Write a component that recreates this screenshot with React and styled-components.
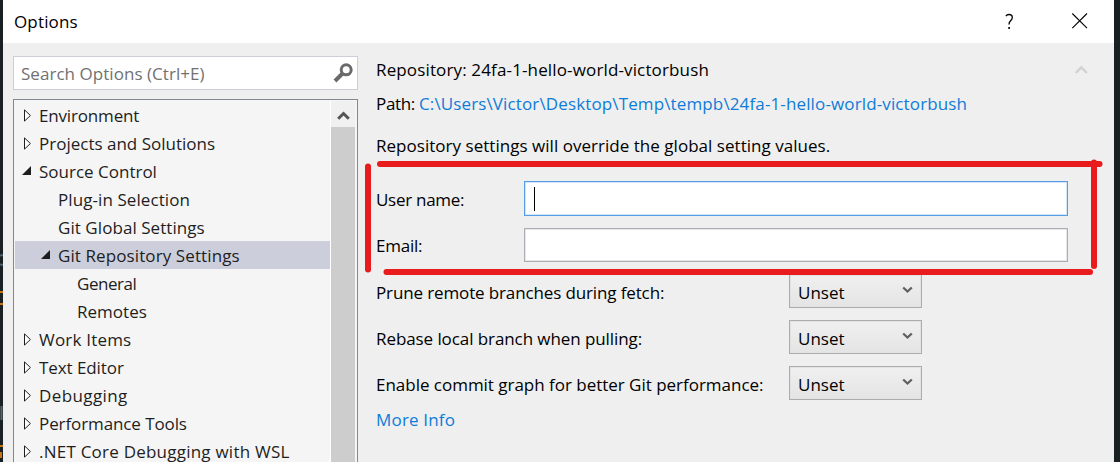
import React from 'react';
import styled, { createGlobalStyle } from 'styled-components';

const GlobalStyle = createGlobalStyle`
  * { box-sizing: border-box; }
  body {
    margin: 0;
    overflow: hidden;
    background: #182023;
    font-family: 'Open Sans', 'Noto Sans', sans-serif;
    font-size: 17px;
    line-height: 28px;
    color: #000;
  }
`;

const Desktop = styled.div`
  position: relative;
  display: flex;
  height: 462px;
  overflow: hidden;
`;

const EditorEdge = styled.div`
  flex: none;
  width: 3px;
  overflow: hidden;
  background: #182023;
`;

const Dialog = styled.div`
  flex: none;
  width: 1111px;
  display: flex;
  flex-direction: column;
  background: #efefef;
`;

const Text = styled.span`
  white-space: pre;
  padding-top: 2px;
  letter-spacing: ${(p) => p.$ls || 0}px;
`;

const TitleBar = styled.header`
  flex: none;
  height: 43px;
  display: flex;
  align-items: center;
  padding: 0 26px 0 11px;
  background: #fff;
`;

const Title = styled(Text)`
  padding-top: 0;
`;

const TitleButtons = styled.div`
  margin-left: auto;
  display: flex;
  align-items: center;
  gap: 57px;
`;

const Body = styled.div`
  flex: 1;
  min-height: 0;
  display: flex;
`;

const Sidebar = styled.aside`
  flex: none;
  width: 355px;
  padding: 13px 0 0 10px;
  display: flex;
  flex-direction: column;
  gap: 9px;
`;

const SearchBox = styled.div`
  flex: none;
  width: 345px;
  height: 34px;
  display: flex;
  align-items: center;
  justify-content: space-between;
  padding: 0 3px 0 7px;
  border: 1px solid #cccedb;
  background: #fff;
  color: #717171;
`;

const TreePanel = styled.div`
  width: 345px;
  height: 380px;
  flex: none;
  display: flex;
  padding: 1px 2px 0 1px;
  border: 1px solid #828790;
  background: #f5f5f5;
`;

const Tree = styled.div`
  flex: 1;
`;

const TreeRow = styled.div`
  height: 28px;
  display: flex;
  align-items: center;
  padding-left: ${(p) => 5 + p.$depth * 19}px;
  background: ${(p) => (p.$selected ? '#cccedb' : 'transparent')};
  color: #1e1e1e;
`;

const ArrowSlot = styled.span`
  flex: none;
  width: 19px;
  height: 28px;
  display: flex;
`;

const ScrollBar = styled.div`
  width: 25px;
  flex: none;
  display: flex;
  flex-direction: column;
  border-left: 1px solid #fff;
  background: #f0f0f0;
`;

const ScrollUp = styled.div`
  height: 26px;
  flex: none;
  display: flex;
  justify-content: center;
`;

const ScrollThumb = styled.div`
  flex: 1;
  background: #cdcdcd;
`;

const Settings = styled.main`
  width: 756px;
  padding: 12px 22px 0 18px;
  display: flex;
  flex-direction: column;
`;

const InfoLine = styled.div`
  flex: none;
  height: 28px;
  margin-bottom: ${(p) => p.$after}px;
  display: flex;
  align-items: center;
  justify-content: ${(p) => (p.$split ? 'space-between' : 'flex-start')};
`;

const Link = styled(Text)`
  color: #0e7cd8;
`;

const FieldRow = styled.div`
  flex: none;
  width: 692px;
  height: ${(p) => p.$height || 34}px;
  margin-bottom: 12px;
  display: flex;
  align-items: center;
  justify-content: space-between;

  &:nth-last-child(2) {
    margin-bottom: 5px;
  }
`;

const FieldLabel = styled(Text)`
  padding-top: ${(p) => p.$drop || 0}px;
`;

const TextField = styled.div`
  width: 544px;
  height: 100%;
  padding: 5px 9px;
  border: 1px solid ${(p) => (p.$focused ? '#569de5' : '#abadb3')};
  box-shadow: inset 0 0 0 1px ${(p) => (p.$focused ? '#d3e5f8' : '#e6e7e9')};
  background: #fff;
`;

const Caret = styled.div`
  width: 1px;
  height: 24px;
  background: #000;
`;

const Select = styled.div`
  width: 133px;
  height: 34px;
  margin-right: 146px;
  padding: 2px 8px 0 8px;
  display: flex;
  align-items: center;
  justify-content: space-between;
  border: 1px solid #acacac;
  box-shadow: inset 0 0 0 1px #e2e2e2;
  background: linear-gradient(#f0f0f0, #e4e4e4);
`;

const Annotation = styled.svg`
  position: absolute;
  left: 0;
  top: 0;
  pointer-events: none;
`;

const treeItems = [
  { label: 'Environment', depth: 0, arrow: 'closed', ls: -0.17 },
  { label: 'Projects and Solutions', depth: 0, arrow: 'closed', ls: 0 },
  { label: 'Source Control', depth: 0, arrow: 'open', ls: 0 },
  { label: 'Plug-in Selection', depth: 1, ls: 0.08 },
  { label: 'Git Global Settings', depth: 1, ls: 0.06 },
  { label: 'Git Repository Settings', depth: 1, arrow: 'open', selected: true, ls: 0.1 },
  { label: 'General', depth: 2, ls: -0.45 },
  { label: 'Remotes', depth: 2, ls: 0.02 },
  { label: 'Work Items', depth: 0, arrow: 'closed', ls: 0.2 },
  { label: 'Text Editor', depth: 0, arrow: 'closed', ls: -0.08 },
  { label: 'Debugging', depth: 0, arrow: 'closed', ls: 0.4 },
  { label: 'Performance Tools', depth: 0, arrow: 'closed', ls: -0.1 },
  { label: '.NET Core Debugging with WSL', depth: 0, arrow: 'closed', ls: 0.23 },
];

const options = [
  { label: 'Prune remote branches during fetch:', ls: -0.13 },
  { label: 'Rebase local branch when pulling:', ls: -0.08 },
  { label: 'Enable commit graph for better Git performance:', ls: -0.02 },
];

function TreeArrow({ kind }) {
  return (
    <ArrowSlot>
      <svg width="19" height="28" viewBox="0 0 19 28">
        {kind === 'closed' && (
          <path d="M4.5 8.9V20.1L10.4 14.5Z" fill="#fff" stroke="#1e1e1e" />
        )}
        {kind === 'open' && <path d="M11 9V18H2Z" fill="#1e1e1e" />}
      </svg>
    </ArrowSlot>
  );
}

export default function App() {
  return (
    <Desktop>
      <GlobalStyle />
      <EditorEdge>
        <svg width="3" height="462">
          <path d="M0 256Q2 254 3 256M0 264Q2 266 3 264" stroke="#4b626f" strokeWidth="2" fill="none" />
          <path d="M0 292H3M0 304H3" stroke="#c87414" strokeWidth="2" />
          <path d="M1.500 406V420" stroke="#5d666a" strokeWidth="2" />
          <path d="M0 446H3M1 452V458" stroke="#c87414" strokeWidth="2" />
        </svg>
      </EditorEdge>
      <Dialog>
        <TitleBar>
          <Title $ls={0.15}>Options</Title>
          <TitleButtons>
            <svg width="10" height="18" viewBox="0 0 10 18">
              <path d="M1.900 3.100Q2.900 1.500 5 1.500Q8.300 1.500 8.300 4.500Q8.300 6.200 6.600 7.700Q5 9.100 5 11.500" fill="none" stroke="#000" strokeWidth="1.300" />
              <rect x="4.300" y="14" width="1.600" height="2" />
            </svg>
            <svg width="17" height="17" viewBox="0 0 17 17">
              <path d="M1.300 .5L16 15.200M16 .5L1.300 15.200" stroke="#000" strokeWidth="1.100" />
            </svg>
          </TitleButtons>
        </TitleBar>
        <Body>
          <Sidebar>
            <SearchBox>
              <Text $ls={0.04}>Search Options (Ctrl+E)</Text>
              <svg width="22" height="22" viewBox="0 0 22 22">
                <circle cx="14.200" cy="7.800" r="5" fill="none" stroke="#6a6a6a" strokeWidth="3" />
                <path d="M10.500 11.500L3 19" stroke="#6a6a6a" strokeWidth="4" />
              </svg>
            </SearchBox>
            <TreePanel>
              <Tree>
                {treeItems.map((item) => (
                  <TreeRow key={item.label} $depth={item.depth} $selected={item.selected}>
                    <TreeArrow kind={item.arrow} />
                    <Text $ls={item.ls}>{item.label}</Text>
                  </TreeRow>
                ))}
              </Tree>
              <ScrollBar>
                <ScrollUp>
                  <svg width="24" height="26" viewBox="0 0 24 26">
                    <path d="M7.200 17.800L12.500 12.500L17.800 17.800" fill="none" stroke="#555" strokeWidth="3" />
                  </svg>
                </ScrollUp>
                <ScrollThumb />
              </ScrollBar>
            </TreePanel>
          </Sidebar>
          <Settings>
            <InfoLine $after={6} $split>
              <Text $ls={0.14}>Repository: 24fa-1-hello-world-victorbush</Text>
              <svg width="22" height="28" viewBox="0 0 22 28">
                <path d="M5.800 18L11.300 12.300L16.800 18" fill="none" stroke="#d2d2d2" strokeWidth="2.400" />
              </svg>
            </InfoLine>
            <InfoLine $after={14}>
              <Text $ls={-0.35}>Path: </Text>
              <Link $ls={0.13}>C:\Users\Victor\Desktop\Temp\tempb\24fa-1-hello-world-victorbush</Link>
            </InfoLine>
            <InfoLine $after={22}>
              <Text $ls={0.03}>Repository settings will override the global setting values.</Text>
            </InfoLine>
            <FieldRow $height={35}>
              <FieldLabel $ls={-0.28} $drop={3}>User name:</FieldLabel>
              <TextField $focused><Caret /></TextField>
            </FieldRow>
            <FieldRow>
              <FieldLabel $ls={-0.25} $drop={2}>Email:</FieldLabel>
              <TextField />
            </FieldRow>
            {options.map((option) => (
              <FieldRow key={option.label}>
                <FieldLabel $ls={option.ls} $drop={4}>{option.label}</FieldLabel>
                <Select>
                  <Text>Unset</Text>
                  <svg width="11" height="14" viewBox="0 0 11 14">
                    <path d="M1.200 2.500L5.500 6.500L9.800 2.500" fill="none" stroke="#606060" strokeWidth="2.300" />
                  </svg>
                </Select>
              </FieldRow>
            ))}
            <InfoLine $after={0}>
              <Link $ls={0.18}>More Info</Link>
            </InfoLine>
          </Settings>
        </Body>
      </Dialog>
      <Annotation width="1120" height="462" viewBox="0 0 1120 462">
        <g fill="none" stroke="#e81c1c" strokeWidth="6" strokeLinecap="round">
          <path d="M380 164H1099.500" />
          <path d="M368 166.500V269.500" />
          <path d="M1094 162.500V266" />
          <path d="M386.500 272H1090" />
        </g>
      </Annotation>
    </Desktop>
  );
}
